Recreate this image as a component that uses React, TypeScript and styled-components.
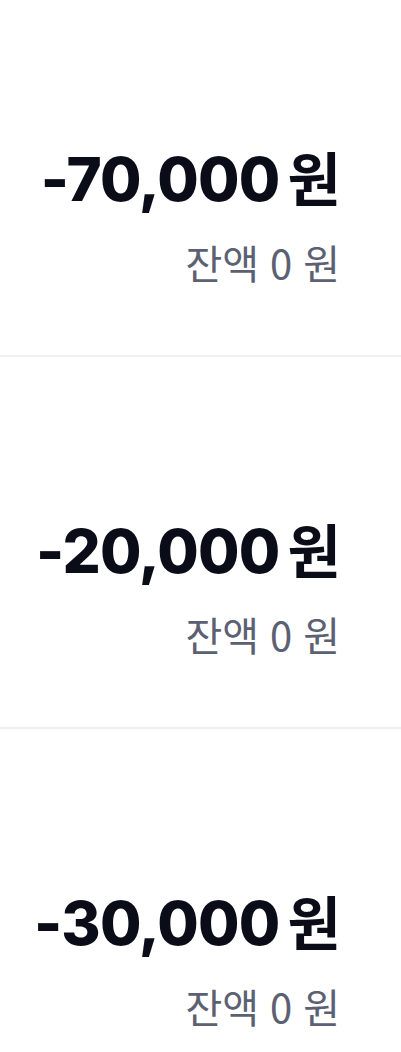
import styled, { createGlobalStyle } from 'styled-components'

const GlobalStyle = createGlobalStyle`
  html, body {
    margin: 0;
    padding: 0;
    background: #ffffff;
  }
  body {
    font-family: "Inter", "Noto Sans CJK KR", sans-serif;
    overflow: hidden;
  }
`

interface Item {
  amount: string
  balance: string
}

const items: Item[] = [
  { amount: '-70,000', balance: '0' },
  { amount: '-20,000', balance: '0' },
  { amount: '-30,000', balance: '0' },
]

const List = styled.div`
  margin-top: -15px;
  display: flex;
  flex-direction: column;
`

const Row = styled.div`
  height: 372px;
  box-sizing: border-box;
  padding: 155px 61px 0 0;
  display: flex;
  flex-direction: column;
  align-items: flex-end;
  border-bottom: 2px solid #f0f0f4;
`

const Amount = styled.div`
  font-size: 60px;
  font-weight: 800;
  line-height: 72px;
  color: #0a0c18;
  letter-spacing: -0.8px;
  display: flex;
  align-items: baseline;
  gap: 8px;
`

const Won = styled.span`
  font-family: "Noto Sans CJK KR", sans-serif;
  font-weight: 700;
  font-size: 58px;
`

const Balance = styled.div`
  margin-top: 24px;
  font-family: "Noto Sans CJK KR", sans-serif;
  font-size: 40px;
  line-height: 46px;
  color: #5b6173;
  font-weight: 400;
  word-spacing: 2px;
`

const App = () => {
  return (
    <>
      <GlobalStyle />
      <List>
        {items.map((it, i) => (
          <Row key={i}>
            <Amount>
              {it.amount}
              <Won>원</Won>
            </Amount>
            <Balance>잔액 {it.balance} 원</Balance>
          </Row>
        ))}
      </List>
    </>
  )
}

export default App
